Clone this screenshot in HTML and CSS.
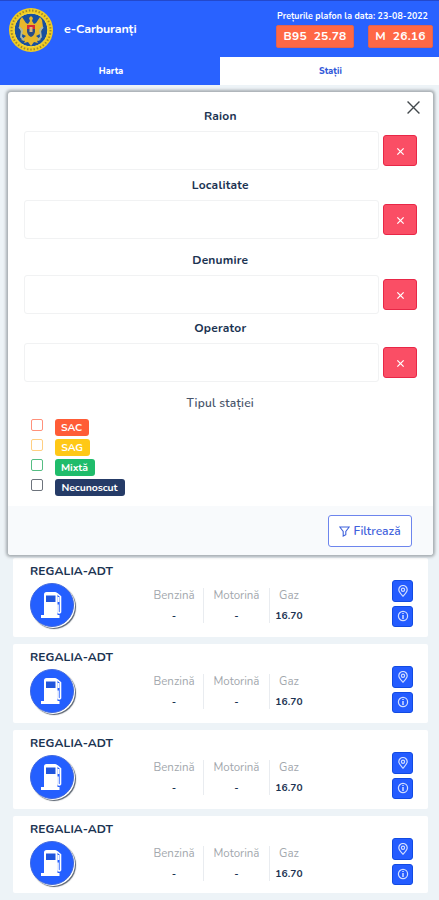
FILE: index.html
```
<!DOCTYPE html>
<html lang="ro">
<head>
<meta charset="utf-8">
<title>e-Carburanți</title>
<link rel="stylesheet" href="styles.css">
</head>
<body>
<svg class="defs" aria-hidden="true">
  <symbol id="x" viewBox="0 0 10 10"><path d="M1.500 1.500l7 7M8.500 1.500l-7 7" fill="none" stroke="currentColor"/></symbol>
  <symbol id="pump" viewBox="0 0 22 26"><path d="M3 23V2.500Q3 0 5.500 0H14Q16.500 0 16.500 2.500V23H18.500V26H0V23Z" fill="#fff"/><path d="M5 3.500h9.500v6.500H5z" fill="#2055dc"/><path d="M16 1.500l3.500 3v15.500q-1.200 2-2.500 0v-7.500" fill="none" stroke="#fff" stroke-width="1.600"/><path d="M17.500 5v5" stroke="#fff" stroke-width="2"/></symbol>
  <symbol id="pin" viewBox="0 0 12 12"><path d="M6 11.200C3.800 8.700 1.800 6.900 1.800 4.700a4.200 4.200 0 0 1 8.400 0C10.200 6.900 8.200 8.700 6 11.200z" fill="none" stroke="currentColor" stroke-width="1.200"/><circle cx="6" cy="4.700" r="1.600" fill="none" stroke="currentColor" stroke-width="1.200"/></symbol>
  <symbol id="info" viewBox="0 0 12 12"><circle cx="6" cy="6" r="4.600" fill="none" stroke="currentColor" stroke-width="1.200"/><path d="M6 5v4M6 2.900v1.200" stroke="currentColor" stroke-width="1.500"/></symbol>
</svg>
<header class="header">
  <svg class="emblem" viewBox="0 0 46 46">
    <circle cx="23" cy="23" r="22" fill="#f0cc22"/>
    <circle cx="23" cy="23" r="19.500" fill="none" stroke="#a18a2c" stroke-width="2" stroke-dasharray="1.500 1.800"/>
    <circle cx="23" cy="23" r="16.800" fill="#174f9e" stroke="#ffe042" stroke-width="1"/>
    <path d="M23 9l2 2-1 3 2 3 2-1 4-6 2 3 1 7-3 7-4 2 5 4-4 1 1 2-4-1-3 4-3-4-4 1 1-2-4-1 5-4-4-2-3-7 1-7 2-3 4 6 2 1 2-3-1-3z" fill="#e6b72c"/>
    <path d="M11 20l3 3-1 7 3 3M35 20l-3 3 1 7-3 3" fill="none" stroke="#a9b6a5" stroke-width="1.800"/>
    <path d="M19 18h8v4h-8z" fill="#d52a35"/><path d="M19 22h8v3q-1 4-4 5-3-1-4-5z" fill="#294c87"/>
    <path d="M21.500 20h3v5h-3z" fill="#d9b47e"/>
  </svg>
  <h1 class="brand">e-Carburanți</h1>
  <div class="prices">
    <p class="date">Prețurile plafon la data: 23-08-2022</p>
    <div class="tags"><span class="tag tag-b95">B95&nbsp; 25.78</span><span class="tag tag-m">M&nbsp; 26.16</span></div>
  </div>
</header>
<nav class="tabs"><a class="tab">Harta</a><a class="tab active">Stații</a></nav>

<main class="stations">
  <article class="card"><h2>REGALIA-ADT</h2><div class="row"><div class="logo"><svg><use href="#pump"/></svg></div><dl class="fuel"><div class="benz"><dt>Benzină</dt><dd>-</dd></div><div class="mot"><dt>Motorină</dt><dd>-</dd></div><div class="gaz"><dt>Gaz</dt><dd>16.70</dd></div></dl><div class="actions"><button><svg><use href="#pin"/></svg></button><button><svg><use href="#info"/></svg></button></div></div></article>
  <article class="card"><h2>REGALIA-ADT</h2><div class="row"><div class="logo"><svg><use href="#pump"/></svg></div><dl class="fuel"><div class="benz"><dt>Benzină</dt><dd>-</dd></div><div class="mot"><dt>Motorină</dt><dd>-</dd></div><div class="gaz"><dt>Gaz</dt><dd>16.70</dd></div></dl><div class="actions"><button><svg><use href="#pin"/></svg></button><button><svg><use href="#info"/></svg></button></div></div></article>
  <article class="card"><h2>REGALIA-ADT</h2><div class="row"><div class="logo"><svg><use href="#pump"/></svg></div><dl class="fuel"><div class="benz"><dt>Benzină</dt><dd>-</dd></div><div class="mot"><dt>Motorină</dt><dd>-</dd></div><div class="gaz"><dt>Gaz</dt><dd>16.70</dd></div></dl><div class="actions"><button><svg><use href="#pin"/></svg></button><button><svg><use href="#info"/></svg></button></div></div></article>
  <article class="card last"><h2>REGALIA-ADT</h2><div class="row"><div class="logo"><svg><use href="#pump"/></svg></div><dl class="fuel"><div class="benz"><dt>Benzină</dt><dd>-</dd></div><div class="mot"><dt>Motorină</dt><dd>-</dd></div><div class="gaz"><dt>Gaz</dt><dd>16.70</dd></div></dl><div class="actions"><button><svg><use href="#pin"/></svg></button><button><svg><use href="#info"/></svg></button></div></div></article>
</main>

<section class="modal">
  <button class="close"><svg><use href="#x"/></svg></button>
  <div class="body">
    <div class="field"><label>Raion</label><div class="control"><div class="input"></div><button class="clear"><svg><use href="#x"/></svg></button></div></div>
    <div class="field spaced"><label>Localitate</label><div class="control"><div class="input"></div><button class="clear"><svg><use href="#x"/></svg></button></div></div>
    <div class="field"><label>Denumire</label><div class="control"><div class="input"></div><button class="clear"><svg><use href="#x"/></svg></button></div></div>
    <div class="field"><label>Operator</label><div class="control"><div class="input"></div><button class="clear"><svg><use href="#x"/></svg></button></div></div>
    <p class="type-title">Tipul stației</p>
    <div class="types">
      <div class="type sac"><i></i><span>SAC</span></div>
      <div class="type sag"><i></i><span>SAG</span></div>
      <div class="type mix"><i></i><span>Mixtă</span></div>
      <div class="type nec"><i></i><span>Necunoscut</span></div>
    </div>
  </div>
  <footer class="footer"><button class="filter"><svg viewBox="0 0 11 11"><path d="M.8 1h9.400L6.800 5.500v3.200L4.200 10V5.500z" fill="none" stroke="currentColor" stroke-width="1.100"/></svg><span>Filtrează</span></button></footer>
</section>
</body>
</html>
```
FILE: styles.css
```
* { box-sizing: border-box; }
body { margin: 0; width: 439px; height: 900px; overflow: hidden; position: relative; background: #edf3f7; color: #1b3352; font-family: Nunito, "Open Sans", "Noto Sans", sans-serif; }
h1, h2, p, dl, dd { margin: 0; }
button { padding: 0; border: 0; font-family: inherit; display: flex; align-items: center; justify-content: center; }
.defs { display: none; }
.header { height: 57px; display: flex; background: #2962ff; border-top: 1px solid #2348cc; color: #fff; }
.emblem { width: 46px; height: 46px; margin: 6px 0 0 8px; flex: none; }
.brand { margin: 18px 0 0 10px; width: 80px; font-size: 12.500px; line-height: 20px; font-weight: 700; letter-spacing: -.15px; white-space: nowrap; }
.prices { margin: 9px 0 0 132px; }
.date { margin-left: 1px; font-size: 8.800px; line-height: 12px; height: 15px; font-weight: 700; letter-spacing: .05px; white-space: nowrap; }
.tags { display: flex; gap: 14px; }
.tag { height: 23px; border-radius: 2px; background: #ff6845; border: 1px solid #de6353; font-size: 12px; line-height: 21px; font-weight: 700; letter-spacing: .2px; text-align: center; white-space: nowrap; }
.tag-b95 { width: 78px; }
.tag-m { width: 65px; }
.tabs { height: 28px; display: flex; }
.tab { width: 220px; padding-left: 2px; background: #2962ff; color: #fff; font-size: 8.800px; line-height: 28px; font-weight: 800; text-align: center; letter-spacing: .1px; }
.tab.active { width: 219px; background: #fff; color: #3158d8; }

.stations { margin: 473px 11px 0 13px; display: flex; flex-direction: column; gap: 7px; }
.card { height: 79px; background: #fff; padding: 5px 15px 0 17px; border-radius: 2px; }
.card.last { height: 77px; }
.card h2 { font-size: 12px; line-height: 17px; height: 16px; font-weight: 700; letter-spacing: .1px; white-space: nowrap; }
.row { display: flex; }
.logo { width: 44px; height: 44px; margin-top: 4px; border-radius: 50%; background: #245fff; border: 1px solid #3f68df; box-shadow: 1px 1px 0 #fff, 2px 2px 1px #555f6c; display: flex; align-items: center; justify-content: center; }
.logo svg { width: 22px; height: 26px; }
.fuel { display: flex; margin: 9px 0 0 69px; width: 178px; height: 35px; text-align: center; }
.fuel > div + div { border-left: 1px solid #e9ecf0; }
.fuel .benz { width: 60px; padding-left: 2px; }
.fuel .mot { width: 66px; }
dt { font-size: 11.500px; line-height: 14px; height: 16px; color: #a2a7ad; white-space: nowrap; }
dd { font-size: 10.200px; line-height: 16px; margin-top: 4px; font-weight: 700; letter-spacing: .1px; }
.gaz dt, .gaz dd { width: 38px; }
.actions { margin: 1px 0 0 71px; display: flex; flex-direction: column; gap: 4px; }
.actions button { width: 21px; height: 21.500px; border-radius: 3px; background: #245cff; border: 1px solid #124be2; color: #d2deff; }
.actions svg { width: 12px; height: 12px; }

.modal { position: absolute; left: 7.500px; top: 92px; width: 425.500px; height: 462.500px; background: #fff; border-radius: 3px; box-shadow: 0 0 3px 1.500px rgba(70, 76, 82, .42); }
.close { position: absolute; right: 11px; top: 7px; width: 17px; height: 16px; background: none; color: #42484c; }
.close svg { width: 17px; height: 17px; }
.close use { stroke-width: .8; }
.body { height: 414px; padding: 15px 16px 0; }
.field { height: 68.500px; }
.field.spaced { height: 75px; }
.field label { display: block; height: 24px; line-height: 18px; font-size: 12px; font-weight: 700; letter-spacing: .2px; text-align: center; }
.control { display: flex; align-items: center; gap: 4px; }
.input { width: 356px; height: 39px; border: 1px solid #f1f2f3; border-radius: 3px; }
.clear { width: 34px; height: 31px; border-radius: 3px; background: #fa4e65; border: 1px solid #e82747; color: #fff; padding-top: 2px; }
.clear svg { width: 9px; height: 9px; }
.clear use { stroke-width: 1.400; }
.type-title { margin-top: 6px; font-size: 12px; line-height: 18px; font-weight: 600; letter-spacing: .2px; text-align: center; color: #47546a; }
.types { margin: 7px 0 0 7px; display: flex; flex-direction: column; gap: 3.300px; }
.type { height: 17px; display: flex; }
.type i { width: 12px; height: 12px; border: 1px solid; border-radius: 2px; margin-right: 12px; }
.type span { border-radius: 3px; font-size: 10.500px; line-height: 17px; font-weight: 700; letter-spacing: -.1px; color: #fff; text-align: center; }
.sac i { color: #ff917b; } .sac span { width: 34px; background: #ff5c36; }
.sag i { color: #ffcf82; } .sag span { width: 35px; background: #ffc816; }
.mix i { color: #55bd83; } .mix span { width: 40px; background: #1fbc6b; }
.nec i { color: #6d737c; } .nec span { width: 70px; background: #253b67; }
.footer { height: 48.500px; background: #f8fafc; padding: 9px 21px 0; display: flex; justify-content: flex-end; border-radius: 0 0 3px 3px; }
.filter { width: 84px; height: 32px; border: 1px solid #6d85ed; border-radius: 3px; background: #fff; color: #3f62dc; font-size: 12px; font-weight: 600; gap: 3px; }
.filter svg { width: 11px; height: 11px; }
```
